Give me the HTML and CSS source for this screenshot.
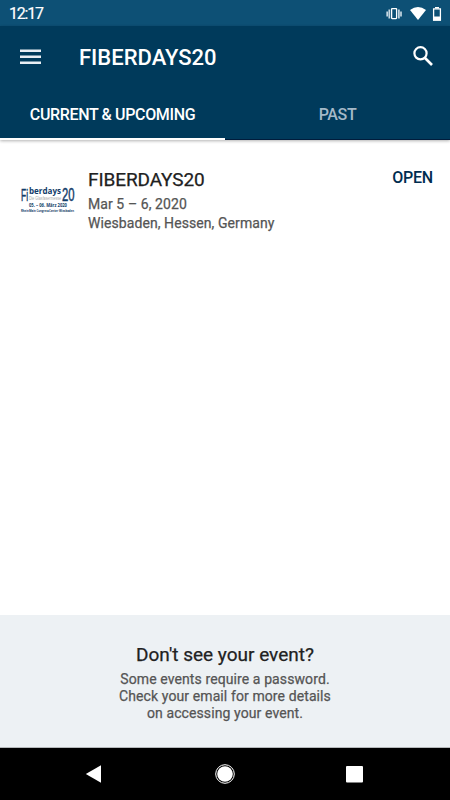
FILE: index.html
```
<!DOCTYPE html>
<html lang="en">
<head>
    <meta charset="UTF-8">
    <meta name="viewport" content="width=device-width, initial-scale=1.0">
    <title>FIBERDAYS20</title>
    <link rel="stylesheet" href="styles.css">
</head>
<body>
    <div class="statusbar">
        <span class="clock">12:17</span>
        <svg class="status-icons" width="56" height="16" viewBox="0 0 56 16">
            <!-- vibrate -->
            <g fill="none" stroke="#c6d8e2">
                <rect x="5.6" y="2.6" width="5" height="10" rx="0.5" stroke="#fff" stroke-width="1.3"/>
                <path d="M3.3 3.5v9M12.9 3.5v9" stroke-width="1.7"/>
                <path d="M1.2 5.5v5M15 5.5v5" stroke-width="1.7"/>
            </g>
            <!-- wifi -->
            <path d="M24 4Q32 -1.8 40 4L32 14z" fill="#fff"/>
            <!-- battery -->
            <path d="M49 1h4v1.5h-4z" fill="#fff"/>
            <rect x="47.6" y="2.9" width="6.8" height="11.2" fill="none" stroke="#fff" stroke-width="1.3"/>
            <path d="M47 10.5h8v4.1h-8z" fill="#fff"/>
        </svg>
    </div>

    <header class="header">
        <div class="appbar">
            <svg class="menu-icon" width="21" height="16" viewBox="0 0 21 16">
                <path d="M0 1.7h21M0 7.7h21M0 13.7h21" stroke="#e8eef4" stroke-width="2.4"/>
            </svg>
            <h1>FIBERDAYS20</h1>
            <svg class="search-icon" width="20" height="20" viewBox="0 0 20 20" fill="none" stroke="#fff">
                <circle cx="7.5" cy="7.3" r="6.1" stroke-width="2.2"/>
                <path d="M12 12l7 7" stroke-width="2.7"/>
            </svg>
        </div>
        <nav class="tabs">
            <a class="tab active"><span>CURRENT &amp; UPCOMING</span></a>
            <a class="tab"><span>PAST</span></a>
        </nav>
    </header>

    <main class="events">
        <div class="event">
            <svg class="event-logo" width="58" height="34" viewBox="0 -4 58 34">
                <g fill="#123c69">
                    <text class="logo-narrow" x="1" y="14.5" font-size="17" textLength="7" lengthAdjust="spacingAndGlyphs">Fi</text>
                    <text class="logo-bold" x="9" y="8" font-size="9.5" textLength="32" lengthAdjust="spacingAndGlyphs">berdays</text>
                    <text class="logo-narrow" x="42" y="14.5" font-size="18" textLength="12.5" lengthAdjust="spacingAndGlyphs">20</text>
                    <text class="logo-bold" x="9" y="21.3" font-size="4.3" textLength="38" lengthAdjust="spacingAndGlyphs">05. – 06. März 2020</text>
                    <text class="logo-bold" x="1" y="25.5" font-size="3.1" textLength="53" lengthAdjust="spacingAndGlyphs">RheinMain CongressCenter Wiesbaden</text>
                </g>
                <text class="logo-text" x="9" y="14.2" font-size="5.5" fill="#aaa" textLength="32" lengthAdjust="spacingAndGlyphs">Die Glasfasermesse</text>
            </svg>
            <div class="event-info">
                <h2>FIBERDAYS20</h2>
                <p class="date">Mar 5 – 6, 2020</p>
                <p class="place">Wiesbaden, Hessen, Germany</p>
            </div>
            <a class="open">OPEN</a>
        </div>
    </main>

    <section class="help">
        <h2>Don't see your event?</h2>
        <p>Some events require a password.<br>Check your email for more details<br>on accessing your event.</p>
    </section>

    <footer class="navbar">
        <svg width="17" height="18" viewBox="0 0 17 18"><path d="M0.8 9L16 0.3v17.5z" fill="#fff"/></svg>
        <svg class="home-icon" width="20" height="20" viewBox="0 0 20 20">
            <circle cx="10" cy="10" r="9.3" fill="none" stroke="#fff" stroke-width="1"/>
            <circle cx="10" cy="10" r="7.8" fill="#fff"/>
        </svg>
        <svg width="17" height="17" viewBox="0 0 17 17"><rect width="17" height="16.5" rx="1" fill="#fff"/></svg>
    </footer>
</body>
</html>
```
FILE: styles.css
```
* {
    box-sizing: border-box;
}
body {
    margin: 0;
    height: 100vh;
    display: flex;
    flex-direction: column;
    background-color: white;
    font-family: Roboto, sans-serif;
    overflow: hidden;
}
h1, h2, p {
    margin: 0;
    font-weight: 400;
    white-space: nowrap;
}
h2, p {
    -webkit-text-stroke: 0.25px;
}
.statusbar {
    height: 26px;
    padding: 1px 8px 0 9px;
    display: flex;
    align-items: center;
    justify-content: space-between;
    background-color: #0d5075;
    color: white;
}
.clock {
    font-size: 16px;
    font-weight: 400;
    letter-spacing: -1.2px;
    -webkit-text-stroke: 0.2px;
}
.header {
    height: 114px;
    background-color: #003a5b;
    color: white;
    border-bottom: 1px solid #001c3c;
    box-shadow: 0 1px 3px rgba(0, 0, 0, 0.3);
}
.appbar {
    height: 62px;
    padding: 0 17px 0 20px;
    display: flex;
    align-items: center;
}
.search-icon {
    margin-bottom: 2px;
}
.appbar h1 {
    flex: 1;
    margin-left: 38px;
    padding-top: 1px;
    font-size: 22px;
    font-weight: 500;
}
.tabs {
    height: 52px;
    display: flex;
}
.tab {
    flex: 1;
    display: flex;
    align-items: center;
    justify-content: center;
    padding-top: 2px;
    font-size: 16px;
    font-weight: 500;
    letter-spacing: -0.35px;
    color: #a5b9c8;
    border-bottom: 2px solid transparent;
}
.tab.active {
    color: white;
    border-bottom-color: white;
}
.events {
    flex: 1;
    padding: 28px 17px 0 20px;
}
.event {
    display: flex;
    align-items: flex-start;
}
.event-logo {
    margin-top: 14px;
}
.logo-narrow {
    font-family: "Liberation Sans Narrow", "Liberation Sans", sans-serif;
    stroke: #123c69;
    stroke-width: 0.5px;
}
.logo-bold {
    font-family: "Open Sans", sans-serif;
    font-weight: 700;
}
.logo-text {
    font-family: "Liberation Sans", sans-serif;
}
.event-info {
    flex: 1;
    margin-left: 10px;
    color: #555;
    font-size: 14px;
    line-height: 19px;
    letter-spacing: 0.08px;
}
.event-info h2 {
    font-size: 19px;
    line-height: 24px;
    letter-spacing: -0.1px;
    color: #212121;
    margin-bottom: 3px;
}
.open {
    color: #002d50;
    font-size: 16px;
    font-weight: 500;
    line-height: 20px;
    letter-spacing: -0.2px;
}
.help {
    height: 133px;
    padding-top: 28px;
    text-align: center;
    background-color: #edf1f4;
    border-bottom: 1px solid #b5b8ba;
    color: #555;
    font-size: 14px;
    line-height: 17px;
    letter-spacing: 0.1px;
}
.help h2 {
    font-size: 19px;
    line-height: 24px;
    letter-spacing: 0;
    color: #212121;
    margin-bottom: 4px;
}
.navbar {
    height: 52px;
    padding: 0 87px 0 85px;
    display: flex;
    align-items: center;
    justify-content: space-between;
    background-color: black;
}
.home-icon {
    margin-left: 2px;
}
```
